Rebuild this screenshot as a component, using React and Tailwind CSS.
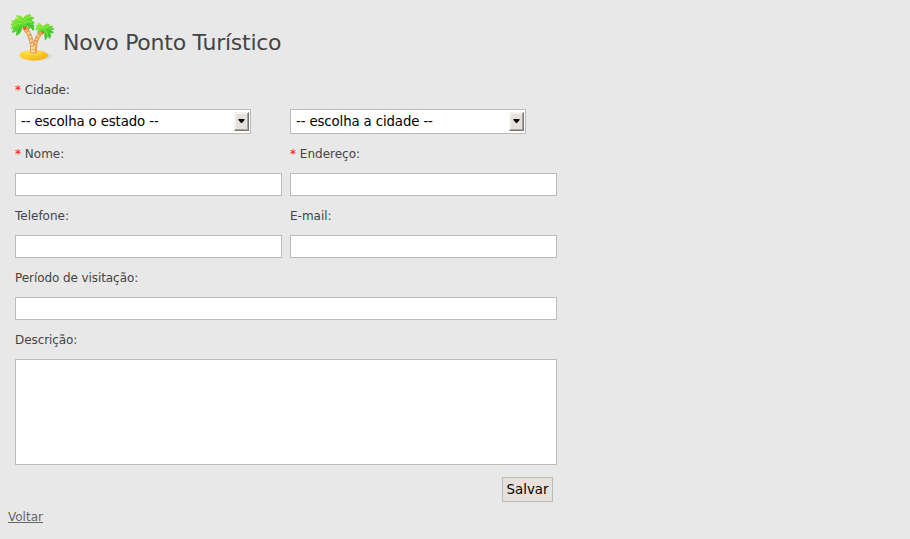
function PalmIcon() {
  return (
    <svg viewBox="24 27 144 144" className="h-12 w-12 shrink-0">
      <defs>
        <linearGradient id="sand" x1="0" y1="0" x2="1" y2="1">
          <stop offset="0" stopColor="#ffdf45" />
          <stop offset="0.5" stopColor="#fbcb2c" />
          <stop offset="1" stopColor="#eba416" />
        </linearGradient>
        <linearGradient id="leaf" x1="0" y1="0" x2="0.6" y2="1">
          <stop offset="0" stopColor="#a4ee3c" />
          <stop offset="0.5" stopColor="#62dc2e" />
          <stop offset="1" stopColor="#38bf30" />
        </linearGradient>
        <radialGradient id="shade">
          <stop offset="0" stopColor="#8a8a8a" stopOpacity="0.6" />
          <stop offset="1" stopColor="#8a8a8a" stopOpacity="0" />
        </radialGradient>
      </defs>
      <ellipse cx="118" cy="154" rx="44" ry="13" fill="url(#shade)" />
      <ellipse cx="101" cy="151" rx="43" ry="16" fill="url(#sand)" />
      <ellipse cx="96" cy="144" rx="28" ry="7" fill="#ffe24e" opacity="0.6" />
      <path d="M76 72 Q93 90 97 124 L97 144" fill="none" stroke="#e2934a" strokeWidth="13" />
      <path d="M125 83 Q110 92 106 119 L104 144" fill="none" stroke="#e2934a" strokeWidth="12" />
      <path d="M76 72 Q93 90 97 124 L97 142" fill="none" stroke="#fbd59a" strokeWidth="8" strokeDasharray="8 4" />
      <path d="M125 83 Q110 92 106 119 L104 142" fill="none" stroke="#f8c98a" strokeWidth="7" strokeDasharray="7 4" />
      <path d="M90 126h21v18q-10 4-21 0z" fill="#eca25a" />
      <path d="M93 125h11v7h-11zM93 135h12v7h-12z" fill="#ffdda1" />
      <circle cx="75" cy="69" r="7" fill="#d96c2d" />
      <circle cx="128" cy="80" r="6" fill="#d96c2d" />
      <g fill="url(#leaf)" stroke="url(#leaf)" strokeWidth="3" strokeLinejoin="round">
        <path d="M68 53 Q54 37 45 42 L49 46 L34 49 L41 52 L32 60 L40 59 L34 71 L42 68 L37 82 Q49 81 51 72 L50 91 Q64 84 65 69 Q68 62 75 60 L76 66 L84 62 L88 72 L92 64 L99 76 Q105 63 97 55 L103 54 Q97 46 91 45 L102 39 Q94 34 86 37 L93 30 Q77 27 69 42 Q63 29 49 33 L58 41 Z" />
        <path d="M129 67 Q124 56 114 54 L117 59 L107 62 L114 65 L106 73 L115 72 L113 84 Q124 81 126 74 L125 84 L133 80 L136 104 Q143 98 142 88 L149 100 Q154 88 149 82 L160 84 Q157 77 150 76 L162 71 L153 69 L157 63 L147 65 L146 57 Q136 55 132 64 Z" />
      </g>
      <path d="M73 53 Q56 40 49 41 M68 57 Q45 52 39 67 M74 45 L87 34 M72 53 Q87 46 96 51 M131 70 L117 66 M134 70 L147 64 M134 75 Q142 80 142 90" fill="none" stroke="#b8f55a" strokeWidth="3" opacity="0.6" />
      <path d="M66 61 Q56 70 54 83 M80 57 L95 66 M130 75 L119 80 M137 73 L152 80" fill="none" stroke="#259e31" strokeWidth="2.5" opacity="0.5" />
      <circle cx="75" cy="70" r="4.5" fill="#d96c2d" />
      <circle cx="82" cy="72" r="4.5" fill="#ee9854" />
      <circle cx="128" cy="82" r="4" fill="#d96c2d" />
      <circle cx="121" cy="83" r="4" fill="#ee9854" />
    </svg>
  );
}

function Label({ children, required, tight }) {
  return (
    <label className={`flex h-[39px] items-center whitespace-pre text-[12px] text-[#444] ${tight ? "tracking-[-0.08px]" : ""}`}>
      {required && <span className="text-[#f00]">* </span>}
      {children}
    </label>
  );
}

const box = "border border-[#bbb] bg-white outline-none";

function Select({ text }) {
  return (
    <div className={`${box} flex h-[25px] w-[236px] items-center justify-between pl-[5px] pr-px text-[13.333px] text-black`}>
      <span className="tracking-[-0.13px]">{text}</span>
      <span className="flex h-[19px] w-[15px] items-center justify-center border border-t-[#f5f3f0] border-l-[#f5f3f0] border-r-[#77736d] border-b-[#77736d] bg-[#e6e1db] pb-px shadow-[inset_-1px_-1px_#aaa59e,inset_1px_1px_#f5f3f0]">
        <svg viewBox="0 0 7 4" className="h-1 w-[7px]">
          <path d="M0.5 0h6v1L4 4H3L0.5 1z" fill="#000" />
        </svg>
      </span>
    </div>
  );
}

function TextField({ label, required, wide }) {
  return (
    <div className={wide ? "col-span-2" : ""}>
      <Label required={required} tight={wide}>{label}</Label>
      <input className={`${box} block h-[23px] w-full`} />
    </div>
  );
}

export default function App() {
  return (
    <main className="h-[539px] w-full overflow-hidden bg-[#e8e8e8] font-['DejaVu_Sans',sans-serif]">
      <header className="flex h-[70px] items-start pl-2 pt-[14px]">
        <PalmIcon />
        <h1 className="pl-[7px] pt-[13px] text-[22px] leading-8 tracking-[-0.25px] text-[#444]">Novo Ponto Turístico</h1>
      </header>
      <form className="ml-[15px] w-[542px]">
        <Label required tight>Cidade:</Label>
        <div className="grid grid-cols-[267px_267px] gap-x-2">
          <Select text="-- escolha o estado --" />
          <Select text="-- escolha a cidade --" />
          <TextField label="Nome:" required />
          <TextField label="Endereço:" required />
          <TextField label="Telefone:" />
          <TextField label="E-mail:" />
          <TextField label="Período de visitação:" wide />
        </div>
        <Label tight>Descrição:</Label>
        <textarea className={`${box} block h-[106px] w-full resize-none`} />
        <div className="flex justify-end pr-1 pt-3">
          <button type="button" className="h-[25px] w-[51px] border border-[#bbb] bg-[#e6e1db] text-[13.333px] leading-none text-black">Salvar</button>
        </div>
      </form>
      <a href="#" className="ml-2 mt-[7px] inline-block text-[12px] leading-4 text-[#666] underline">Voltar</a>
    </main>
  );
}
